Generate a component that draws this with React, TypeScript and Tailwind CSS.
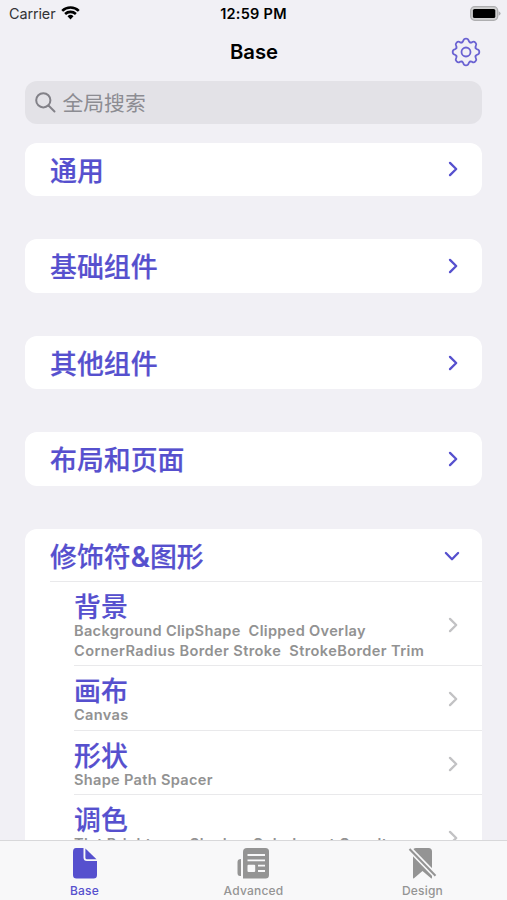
import { clsx } from "clsx";

const sections = ["通用", "基础组件", "其他组件", "布局和页面"];

const modifiers = [
  {
    title: "背景",
    lines: ["Background ClipShape  Clipped Overlay", "CornerRadius Border Stroke  StrokeBorder Trim"],
  },
  { title: "画布", lines: ["Canvas"] },
  { title: "形状", lines: ["Shape Path Spacer"] },
  { title: "调色", lines: ["Tint Brightness Shadow ColorInvert Opacity"], tall: true },
];

const teeth = [0, 45, 90, 135, 180, 225, 270, 315];

const Chevron = ({ className }: { className?: string }) => (
  <svg
    className={clsx("h-4 w-2.5 shrink-0", className)}
    viewBox="0 0 10 16"
    fill="none"
    stroke="currentColor"
    strokeWidth="2.3"
    strokeLinecap="round"
    strokeLinejoin="round"
  >
    <path d="M2 1.9 8.2 8 2 14.1" />
  </svg>
);

const Gear = () => (
  <svg
    className="h-[30px] w-[30px] text-[#6a62d2]"
    viewBox="-15 -15 30 30"
    fill="none"
    stroke="currentColor"
    strokeWidth="1.8"
    strokeLinecap="round"
  >
    <circle r="4.5" />
    {teeth.map((angle) => (
      <path
        key={angle}
        transform={`rotate(${angle})`}
        d="M-3.98 -9.6Q-2.97 -10 -2.6 -11.4Q-2.2 -13.3 0 -13.3T2.6 -11.4Q2.97 -10 3.98 -9.6"
      />
    ))}
  </svg>
);

const StatusBar = () => (
  <div className="grid h-7 grid-cols-3 items-center px-2">
    <div className="flex items-center gap-[6px] pl-px">
      <span className="text-[14.4px] tracking-[-0.1px] text-[#333336]">Carrier</span>
      <svg className="mb-[2px] h-[14px] w-[19px]" viewBox="0 0 19 14" fill="none" stroke="#000" strokeWidth="2.6">
        <path d="M1.2 4.9a12 12 0 0 1 16.6 0M4.1 8a8 8 0 0 1 10.8 0" />
        <path d="m9.5 13.6-3-3.3a4.3 4.3 0 0 1 6 0Z" fill="#000" stroke="none" />
      </svg>
    </div>
    <div className="text-center text-[14.5px] font-semibold tracking-[0.25px] whitespace-nowrap">12:59 PM</div>
    <svg className="-mt-px -mr-[2px] h-[15px] w-[31px] justify-self-end" viewBox="0 0 31 15">
      <rect x="0.7" y="0.7" width="27" height="13.6" rx="4" fill="#d0d0d1" stroke="#aeaeb0" strokeWidth="1.3" />
      <rect x="2.9" y="2.9" width="22.4" height="9.2" rx="1.6" fill="#000" />
      <path d="M28.6 5.2q2 .7 2 2.3t-2 2.3Z" fill="#aeaeb0" />
    </svg>
  </div>
);

const TabBar = () => (
  <nav className="z-10 grid h-[60px] shrink-0 grid-cols-3 border-t border-[#d8d8da] bg-[#f8f8f9] pt-[7px] text-center text-[12px] leading-[16px] font-medium tracking-[0.2px] text-[#949494]">
    <div className="flex flex-col items-center gap-[4px] text-[#5650ce]">
      <svg className="h-[31px] w-[26px]" viewBox="0 0 26 31" fill="currentColor">
        <path d="M4 0H11.5V9.5Q11.5 13 15 13H25V27Q25 30.5 21.5 30.5H4.5Q1 30.5 1 27V4Q1 0 4 0Z" />
        <path d="M13.4 .5 24.5 11.2H15Q13.4 11.2 13.4 9.7Z" />
      </svg>
      <span>Base</span>
    </div>
    <div className="flex flex-col items-center gap-[4px]">
      <svg className="h-[31px] w-[33px]" viewBox="0 0 33 31" fill="currentColor">
        <path d="M4 11v17H3q-2.5 0-2.5-3V14q0-3 3.5-3Z" />
        <path d="M10 0H28.5Q32 0 32 3.5V27Q32 30.5 28.5 30.5H6V4Q6 0 10 0Z" />
        <path d="M10.5 7H28M10.5 12.3H28M21 17.6h7M21 23h7" stroke="#f8f8f9" strokeWidth="1.8" />
        <rect x="10.5" y="16.7" width="7.7" height="7.3" rx="1" fill="#f8f8f9" />
      </svg>
      <span>Advanced</span>
    </div>
    <div className="flex flex-col items-center gap-[4px]">
      <svg className="h-[31px] w-[29px]" viewBox="0 0 29 31" fill="currentColor">
        <path d="M8 0H20.5Q24 0 24 3.5V29.5Q24 31 23 30.2L14.5 23 6 30.2Q5 31 5 29.5V3Q5 0 8 0Z" />
        <path d="m1 .5 27 27.5" stroke="#f8f8f9" strokeWidth="5.4" />
        <path d="m1.5 1 26 26.7" stroke="currentColor" strokeWidth="2.1" />
      </svg>
      <span>Design</span>
    </div>
  </nav>
);

const App = () => {
  return (
    <div className="flex h-[900px] w-[507px] flex-col overflow-hidden bg-[#f1f0f5] font-[Inter,'Noto_Sans_CJK_SC',sans-serif] text-black">
      <StatusBar />

      {/* Navigation title */}
      <header className="grid h-[53px] shrink-0 grid-cols-[1fr_auto_1fr] items-center px-[26px] pb-[5px]">
        <h1 className="col-start-2 pt-px pl-px text-[20.3px] font-semibold">Base</h1>
        <div className="justify-self-end">
          <Gear />
        </div>
      </header>

      <main className="min-h-0 flex-1 overflow-hidden px-[25px]">
        <div className="flex h-[43px] items-center gap-[6.5px] rounded-xl bg-[#e3e2e7] px-[10px] text-[#8c8c92]">
          <svg className="h-[21px] w-[21px]" viewBox="0 0 21 21" fill="none" stroke="#828188" strokeWidth="2" strokeLinecap="round">
            <circle cx="8.3" cy="8.3" r="7.1" />
            <path d="m13.5 13.5 6 6" />
          </svg>
          <span className="pt-[3px] text-[20.8px] leading-none">全局搜索</span>
        </div>

        {/* Collapsed sections */}
        <div className="mt-[18.7px] flex flex-col gap-[43px] text-[#5650ce]">
          {sections.map((name) => (
            <section key={name} className="flex h-[53.6px] items-center justify-between rounded-xl bg-white pr-[24px] pl-[25px]">
              <h2 className="pt-[3px] text-[26.9px] leading-none font-medium [-webkit-text-stroke:0.2px]">{name}</h2>
              <Chevron />
            </section>
          ))}
        </div>

        {/* Expanded section */}
        <section className="mt-[43px] rounded-t-xl bg-white pl-[25px]">
          <div className="flex h-[53px] items-center justify-between border-b border-[#e9e9eb] pr-[25px] text-[#5650ce]">
            <h2 className="pt-[3px] text-[26.9px] leading-none font-medium [-webkit-text-stroke:0.2px]">
              修饰符<span className="text-[29px] leading-none font-semibold">&</span>图形
            </h2>
            <Chevron className="mt-[2px] rotate-90" />
          </div>
          <ul className="pl-6">
            {modifiers.map((item) => (
              <li
                key={item.title}
                className={clsx(
                  "flex justify-between border-b border-[#e9e9eb] pt-[10px] pr-[24px] pb-[4px]",
                  item.tall && "h-[84px]",
                )}
              >
                <div>
                  <h3 className="text-[26.9px] leading-[30px] font-medium text-[#5650ce] [-webkit-text-stroke:0.2px]">{item.title}</h3>
                  {item.lines.map((line, i) => (
                    <p
                      key={line}
                      className={clsx(
                        "text-[14.6px] leading-[19.6px] font-semibold whitespace-pre text-[#929292]",
                        i === 1 ? "tracking-[0.38px]" : "tracking-[0.3px]",
                      )}
                    >
                      {line}
                    </p>
                  ))}
                </div>
                <Chevron className="-mt-[4px] self-center text-[#c2c2c4]" />
              </li>
            ))}
          </ul>
        </section>
      </main>

      <TabBar />
    </div>
  );
};

export default App;
